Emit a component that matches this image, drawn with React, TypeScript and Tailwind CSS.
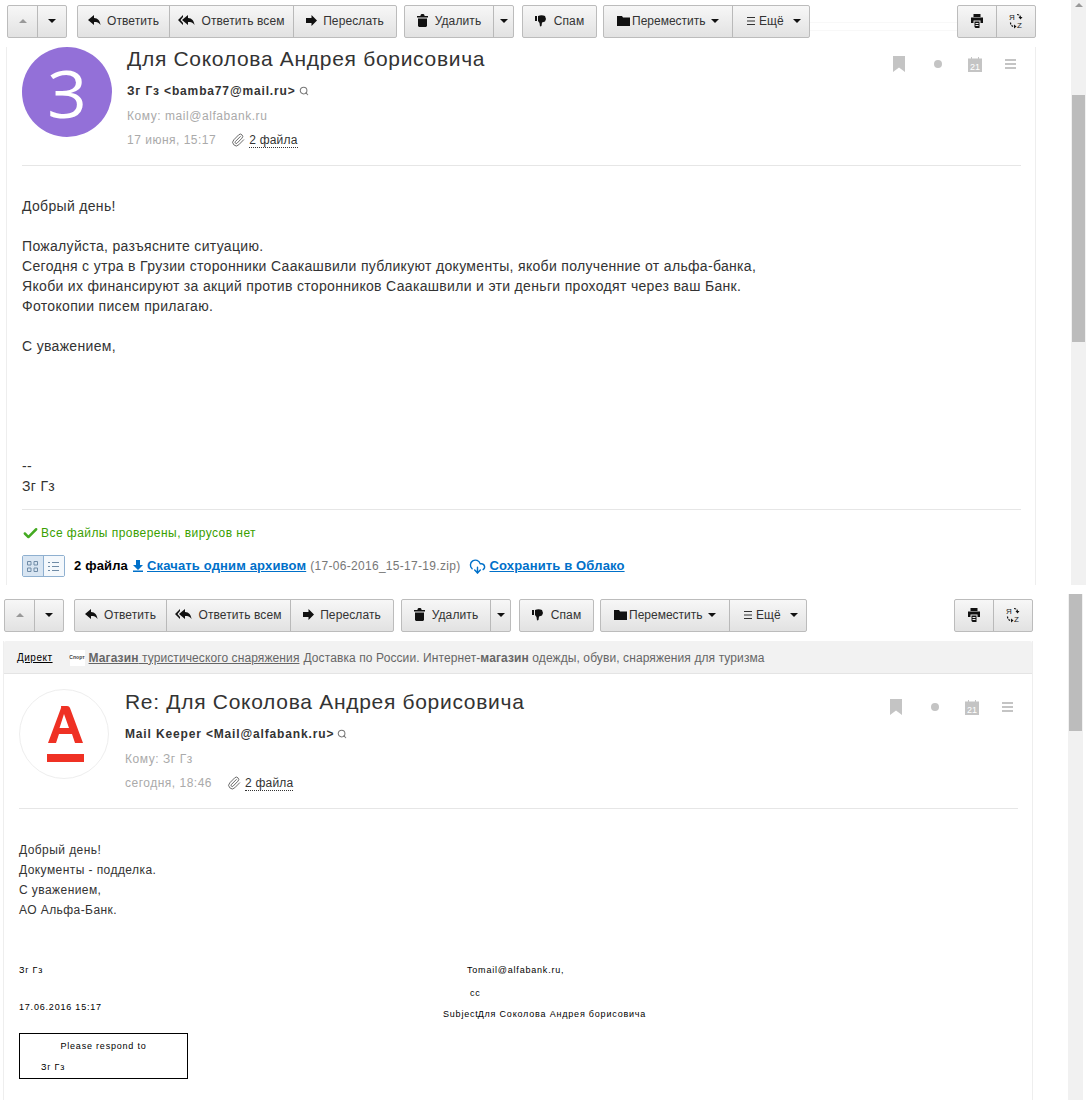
import React from 'react';
import { Check, CloudDownload, Paperclip, Search } from 'lucide-react';

const Caret = ({ up = false, light = false }: { up?: boolean; light?: boolean }) => (
  <svg width="8" height="4" viewBox="0 0 8 4" className={light ? 'text-[#999]' : 'text-[#111]'}>
    <path d={up ? 'M4 0l4 4H0z' : 'M0 0h8L4 4z'} fill="currentColor" />
  </svg>
);

const ReplyIcon = () => (
  <svg width="13" height="11" viewBox="0 0 13 11">
    <path d="M0 5l6-5v3c4 0 6 3 6.500 7C11 7.500 9 7 6 7v3z" fill="#111" />
  </svg>
);

const ReplyAllIcon = () => (
  <svg width="17" height="11" viewBox="0 0 17 11">
    <path d="M0 5l5-5v2L2.500 5 5 8v2z" fill="#111" />
    <path d="M4 5l6-5v3c4 0 6 3 6.500 7C15 7.500 13 7 10 7v3z" fill="#111" />
  </svg>
);

const ForwardIcon = () => (
  <svg width="11" height="11" viewBox="0 0 11 11">
    <path d="M11 5.500L5.500 0v3H0v5h5.500v3z" fill="#111" />
  </svg>
);

const TrashIcon = () => (
  <svg width="11" height="13" viewBox="0 0 11 13">
    <path d="M0 2h3.500V1l1-1h2l1 1v1H11v1.500H0zM1 4.500h9V12l-1 1H2l-1-1z" fill="#111" />
  </svg>
);

const ThumbIcon = () => (
  <svg width="11" height="12" viewBox="0 0 11 12">
    <path d="M0 1h2v5H0zM3 1c2-1 5-1 7 0l1 3-1 2.500-3 1-.5 3.500-1.500.5L4.500 8 3 6z" fill="#111" />
  </svg>
);

const FolderIcon = () => (
  <svg width="13" height="11" viewBox="0 0 13 11">
    <path d="M0 1h5l1 1.500h7V11H0z" fill="#111" />
  </svg>
);

const MoreIcon = () => (
  <svg width="8" height="8" viewBox="0 0 8 8">
    <path d="M0 0h8v1H0zM0 3.500h8v1H0zM0 7h8v1H0z" fill="#333" />
  </svg>
);

const PrintIcon = () => (
  <svg width="12" height="14" viewBox="0 0 12 14">
    <path d="M2.500 0h7v3h-7zM0 3.500h12V9H9.500V6.500h-7V9H0zM3.500 7.500h5V14h-4l-1-1zM5 9h2M5 11h2" fill="#111" />
    <path d="M4.500 9.500h3M4.500 11.500h3" stroke="#eee" strokeWidth="1" />
  </svg>
);

const TranslateIcon = () => (
  <svg width="15" height="16" viewBox="0 0 15 16" fontFamily="'Liberation Sans', Arial, sans-serif" fontSize="8">
    <text x="0" y="7" fill="#222">Я</text>
    <text x="8" y="15" fill="#222">Z</text>
    <path d="M8 1.500c2 0 3.500 1 3.500 3.500M1.500 9.500c0 2.500 1.500 4 4 4" stroke="#111" strokeWidth="1.200" strokeDasharray="2 1" fill="none" />
    <path d="M9.500 4h4l-2 2.500zM5 11.500v4L7.500 13.500z" fill="#111" />
  </svg>
);

const segment = 'flex h-full items-center justify-center gap-[6px] border-r border-[#b9b9b9] pb-[2px] last:border-r-0';
const segmentLeft = 'flex h-full items-center border-r border-[#b9b9b9] pb-[2px] last:border-r-0';

const Toolbar = ({ ghostLines = false }: { ghostLines?: boolean }) => (
  <div className="flex h-[33px] items-stretch pl-[7px] pr-[35px] text-[12px] tracking-[0.1px] text-[#333]">
    <div className="flex rounded-[2px] border border-[#bcbcbc] bg-gradient-to-b from-[#f7f7f7] to-[#e2e2e2]">
      <div className={`${segment} w-[30px]`}><Caret up light /></div>
      <div className={`${segment} w-[28px]`}><Caret /></div>
    </div>
    <div className="ml-[10px] flex rounded-[2px] border border-[#bcbcbc] bg-gradient-to-b from-[#f7f7f7] to-[#e2e2e2]">
      <div className={`${segment} w-[92px]`}><ReplyIcon />Ответить</div>
      <div className={`${segment} w-[124px]`}><ReplyAllIcon />Ответить всем</div>
      <div className={`${segment} w-[102px]`}><ForwardIcon />Переслать</div>
    </div>
    <div className="ml-[7px] flex rounded-[2px] border border-[#bcbcbc] bg-gradient-to-b from-[#f7f7f7] to-[#e2e2e2]">
      <div className={`${segment} w-[89px] gap-[7px]`}><TrashIcon />Удалить</div>
      <div className={`${segment} w-[19px]`}><Caret /></div>
    </div>
    <div className="ml-[8px] flex rounded-[2px] border border-[#bcbcbc] bg-gradient-to-b from-[#f7f7f7] to-[#e2e2e2]">
      <div className={`${segment} w-[73px] gap-[8px]`}><ThumbIcon />Спам</div>
    </div>
    <div className="ml-[6px] flex rounded-[2px] border border-[#bcbcbc] bg-gradient-to-b from-[#f7f7f7] to-[#e2e2e2] tracking-normal">
      <div className={`${segmentLeft} w-[129px] pl-[13px]`}><FolderIcon /><span className="ml-[2px]">Переместить</span><span className="ml-[5px]"><Caret /></span></div>
      <div className={`${segmentLeft} w-[76px] pl-[14px]`}><MoreIcon /><span className="ml-[4px]">Ещё</span><span className="ml-[9px]"><Caret /></span></div>
    </div>
    <div className="flex-1 pt-[17px]">
      {ghostLines && <div className="h-[9px] border-y border-[#f8f8f8]" />}
    </div>
    <div className="flex rounded-[2px] border border-[#bcbcbc] bg-gradient-to-b from-[#f7f7f7] to-[#e2e2e2]">
      <div className={`${segment} w-[39px]`}><PrintIcon /></div>
      <div className={`${segment} w-[38px]`}><TranslateIcon /></div>
    </div>
  </div>
);

const HeaderActions = () => (
  <div className="flex h-[24px] items-center pt-[10px] text-[#c4c4c4]">
    <svg width="12" height="16" viewBox="0 0 12 16"><path d="M0 0h12v16L6 11.500 0 16z" fill="currentColor" /></svg>
    <span className="ml-[29px] h-[8px] w-[8px] rounded-full bg-[#c4c4c4]" />
    <svg width="14" height="15" viewBox="0 0 14 15" className="ml-[26px]" fontFamily="'Liberation Sans', Arial, sans-serif" fontSize="9">
      <path d="M0 1.500h3V0h1v1.500h6V0h1v1.500h3V15H0z" fill="currentColor" />
      <text x="2" y="13" fill="#fff">21</text>
    </svg>
    <svg width="11" height="10" viewBox="0 0 11 10" className="ml-[23px] mr-[5px]"><path d="M0 0h11v2H0zM0 4h11v2H0zM0 8h11v2H0z" fill="currentColor" /></svg>
  </div>
);

interface MailHeaderProps {
  avatar: React.ReactNode;
  title: string;
  sender: string;
  to: string;
  date: string;
  offsetClass?: string;
}

const MailHeader = ({ avatar, title, sender, to, date, offsetClass = '' }: MailHeaderProps) => (
  <div className="flex border-b border-[#e6e6e6] pb-[15px]">
    {avatar}
    <div className={`ml-[15px] flex-1 ${offsetClass}`}>
      <div className="flex justify-between">
        <h1 className="text-[21px] leading-[24px] tracking-[0.7px] text-[#333]">{title}</h1>
        <HeaderActions />
      </div>
      <div className="mt-[10px] flex h-[20px] items-center text-[12px] font-bold tracking-[0.85px] text-[#333]">
        {sender}
        <Search size={10} strokeWidth={2.500} className="ml-[3px] text-[#777]" />
      </div>
      <div className="mt-[5px] h-[20px] text-[12px] leading-[20px] tracking-[0.55px] text-[#aaa]">Кому: {to}</div>
      <div className="mt-[4px] flex h-[20px] items-center text-[12px] text-[#aaa]">
        <span className="tracking-[0.5px]">{date}</span>
        <Paperclip size={14} strokeWidth={1.500} className="ml-[15px] text-[#555]" />
        <span className="ml-[4px] border-b border-dotted border-[#333] leading-[14px] tracking-[0.2px] text-[#333]">2 файла</span>
      </div>
    </div>
  </div>
);

const Card = ({ top, children }: { top?: React.ReactNode; children: React.ReactNode }) => (
  <div className="ml-[6px] mr-[35px] flex-1 border-x border-[#eeeeee]">
    {top}
    <div className="pl-[15px] pr-[14px]">{children}</div>
  </div>
);

const ScrollBar = ({ thumbClass, arrow }: { thumbClass: string; arrow?: boolean }) => (
  <div className="relative w-[15px] bg-[#f1f1f1]">
    {arrow && <div className="absolute left-[4px] top-[3px]"><Caret up light /></div>}
    <div className={`absolute inset-x-[1px] bg-[#bcbcbc] ${thumbClass}`} />
  </div>
);

const FirstMail = () => (
  <div className="flex h-[585px]">
    <div className="flex min-w-0 flex-1 flex-col pt-[5px]">
      <Toolbar ghostLines />
      <div className="h-[9px]" />
      <Card>
        <MailHeader
          avatar={
            <div className="flex h-[90px] w-[90px] items-center justify-center rounded-full bg-[#9370d8] font-['Open_Sans',sans-serif] text-[66px] font-medium text-white">
              З
            </div>
          }
          title="Для Соколова Андрея борисовича"
          sender="Зг Гз <bamba77@mail.ru>"
          to="mail@alfabank.ru"
          date="17 июня, 15:17"
        />
        <div className="pt-[30px] text-[14px] leading-[20px] tracking-[0.32px] text-[#333]">
          <p>Добрый день!</p>
          <p className="mt-[20px]">Пожалуйста, разъясните ситуацию.</p>
          <p>Сегодня с утра в Грузии сторонники Саакашвили публикуют документы, якоби полученние от альфа-банка,</p>
          <p>Якоби их финансируют за акций против сторонников Саакашвили и эти деньги проходят через ваш Банк.</p>
          <p>Фотокопии писем прилагаю.</p>
          <p className="mt-[20px]">С уважением,</p>
          <p className="mt-[100px]">--</p>
          <p>Зг Гз</p>
        </div>
        <div className="mt-[13px] flex h-[46px] items-center border-t border-[#e6e6e6] pt-[1px] text-[12px] tracking-[0.45px] text-[#3aa000]">
          <Check size={17} strokeWidth={3.500} className="mr-[2px] text-[#44aa22]" />
          Все файлы проверены, вирусов нет
        </div>
        <div className="flex h-[22px] items-center text-[13px]">
          <div className="flex h-[22px] w-[43px] rounded-[2px] border border-[#8fb0d0]">
            <div className="flex w-1/2 items-center justify-center border-r border-[#8fb0d0] bg-[#d8e5f2]">
              <svg width="11" height="11" viewBox="0 0 11 11" fill="none" stroke="#6f8ba6"><path d="M.5.500h3.500v3.500H.5zM7 .5h3.500v3.500H7zM.5 7h3.500v3.500H.5zM7 7h3.500v3.500H7z" /></svg>
            </div>
            <div className="flex w-1/2 items-center justify-center bg-[#f4f8fc]">
              <svg width="11" height="11" viewBox="0 0 11 11" stroke="#6f8ba6"><path d="M0 1.500h2M4 1.500h7M0 5.500h2M4 5.500h7M0 9.500h2M4 9.500h7" /></svg>
            </div>
          </div>
          <span className="ml-[9px] font-bold tracking-[0.15px] text-black">2 файла</span>
          <svg width="10" height="12" viewBox="0 0 10 12" className="ml-[5px]"><path d="M3 0h4v5h3L5 10 0 5h3zM0 10.500h10V12H0z" fill="#0070c9" /></svg>
          <a className="ml-[4px] font-bold tracking-[0.15px] text-[#0070c9] underline">Скачать одним архивом</a>
          <span className="ml-[4px] text-[12px] tracking-[0.3px] text-[#777]">(17-06-2016_15-17-19.zip)</span>
          <CloudDownload size={17} className="ml-[9px] text-[#0070c9]" />
          <a className="ml-[3px] font-bold tracking-[0.15px] text-[#0070c9] underline">Сохранить в Облако</a>
        </div>
      </Card>
    </div>
    <ScrollBar thumbClass="top-[95px] h-[247px]" arrow />
  </div>
);

const AlfaAvatar = () => (
  <div className="flex h-[90px] w-[90px] items-center justify-center rounded-full border border-[#eeeeee] bg-white">
    <svg width="88" height="88" viewBox="0 0 88 88">
      <path
        d="M41 16h6c1.500 0 2.500.8 3 2l13 35h-8l-3-9H39l-3 9h-8l13-35c.3-1.200 0-2 0-2zM44 24l-4.500 14h9.500z"
        fill="#ef3124"
        fillRule="evenodd"
      />
      <path d="M27 64h37v8H27z" fill="#ef3124" />
    </svg>
  </div>
);

const SecondMail = () => (
  <div className="-ml-[3px] flex h-[506px] w-[1086px] overflow-hidden">
    <div className="flex min-w-0 flex-1 flex-col pt-[5px]">
      <Toolbar />
      <div className="h-[9px]" />
      <Card
        top={
          <div className="mb-[15px] flex h-[33px] items-center rounded-t-[2px] border-b border-[#e4e4e4] bg-[#f2f2f2] pt-[1px] text-[12px] tracking-[0.1px] text-[#666]">
            <a className="ml-[13px] text-[10px] tracking-[0.5px] text-black underline">Директ</a>
            <span className="ml-[17px] flex h-[16px] w-[15px] items-center justify-center bg-white text-[5px] font-bold leading-[5px] text-[#444]">Спорт</span>
            <a className="ml-[4px] underline"><b>Магазин</b> туристического снаряжения</a>
            <span className="ml-[4px]">Доставка по России. Интернет-<b>магазин</b> одежды, обуви, снаряжения для туризма</span>
          </div>
        }
      >
        <MailHeader
          avatar={<AlfaAvatar />}
          title="Re: Для Соколова Андрея борисовича"
          sender="Mail Keeper <Mail@alfabank.ru>"
          to="Зг Гз"
          date="сегодня, 18:46"
          offsetClass="pl-[1px] pt-[1px]"
        />
        <div className="pt-[31px] text-[12px] leading-[20px] tracking-[0.43px] text-[#333]">
          <p>Добрый день!</p>
          <p>Документы - подделка.</p>
          <p>С уважением,</p>
          <p>АО Альфа-Банк.</p>
        </div>
        <div className="mt-[44px] flex text-[9px] tracking-[0.8px] text-black">
          <div className="w-[424px]">
            <p className="leading-[12px]">Зг Гз</p>
            <p className="mt-[25px] leading-[12px]">17.06.2016 15:17</p>
            <div className="mt-[20px] h-[46px] w-[169px] border border-black">
              <p className="mt-[6px] text-center leading-[12px]">Please respond to</p>
              <p className="ml-[21px] mt-[9px] leading-[12px]">Зг Гз</p>
            </div>
          </div>
          <div>
            <p className="ml-[24px] leading-[12px]">Tomail@alfabank.ru,</p>
            <p className="ml-[27px] mt-[11px] leading-[12px]">cc</p>
            <p className="mt-[9px] leading-[12px]">Subject<span className="-ml-[1px]">Для Соколова Андрея борисовича</span></p>
          </div>
        </div>
      </Card>
    </div>
    <ScrollBar thumbClass="top-0 h-[137px]" />
  </div>
);

export default function App() {
  return (
    <div className="h-[1100px] w-[1086px] overflow-hidden bg-white font-['Liberation_Sans',Arial,sans-serif]">
      <FirstMail />
      <div className="h-[9px]" />
      <SecondMail />
    </div>
  );
}
